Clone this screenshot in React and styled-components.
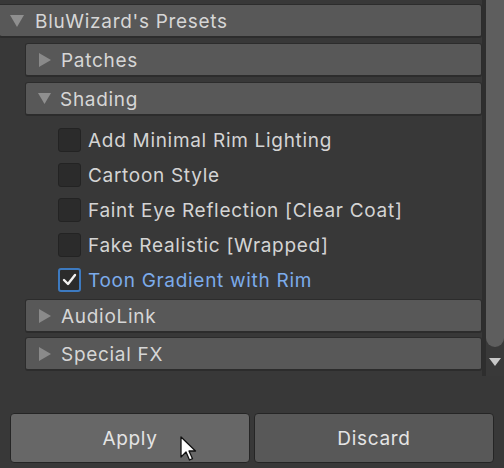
import React from "react";
import styled, { createGlobalStyle } from "styled-components";

const Global = createGlobalStyle`
  html, body { margin: 0; padding: 0; background: #383838; }
  body { font-family: Inter, "Noto Sans", sans-serif; }
`;

const Window = styled.div`
  position: relative;
  width: 504px;
  height: 468px;
  background: #383838;
  display: flex;
  flex-direction: column;
  overflow: hidden;
  color: #d4d4d4;
  font-size: 19px;
  letter-spacing: 0.7px;
`;

const ScrollArea = styled.div`
  height: 376px;
  display: flex;
  flex-direction: row;
`;

const Content = styled.div`
  flex: 1;
  display: flex;
  flex-direction: column;
  padding-top: 4px;
`;

const Scrollbar = styled.div`
  width: 18px;
  border-left: 4px solid #2e2e2e;
  background: #393939;
  display: flex;
  flex-direction: column;
  align-items: center;
`;

const Thumb = styled.div`
  width: 18px;
  height: 347px;
  background: #5e5e5e;
  border-radius: 0 0 9px 9px;
`;

const DownArrow = styled.svg`
  margin-top: 11px;
  display: block;
`;

const Foldout = styled.div`
  box-sizing: border-box;
  height: 34px;
  display: flex;
  align-items: center;
  padding-left: ${(p) => (p.$top ? 10 : 12)}px;
  gap: ${(p) => (p.$top ? 11 : 9)}px;
  background: #585858;
  border: 1px solid #2c2c2c;
  border-bottom-width: 2px;
  border-radius: ${(p) => (p.$top ? "0 3px 3px 3px" : "3px")};
  margin-left: ${(p) => (p.$top ? -1 : 0)}px;
  color: #d6d6d6;
  white-space: nowrap;
`;

const Label = styled.span`
  padding-top: ${(p) => p.$shift || 2}px;
`;

const SubList = styled.div`
  display: flex;
  flex-direction: column;
  padding-left: 25px;
  margin-top: 5px;
  gap: 5px;
`;

const Group = styled.div`
  display: flex;
  flex-direction: column;
  gap: ${(p) => p.$gap || 0}px;
`;

const CheckList = styled.div`
  display: flex;
  flex-direction: column;
  padding: 6px 0 2px 33px;
`;

const CheckRow = styled.label`
  height: 35px;
  display: flex;
  align-items: center;
  gap: 7px;
  color: ${(p) => (p.$on ? "#7cabea" : "#d4d4d4")};
  white-space: nowrap;
`;

const Box = styled.span`
  box-sizing: border-box;
  width: 23px;
  height: 24px;
  border-radius: 3px;
  background: #2b2b2b;
  border: ${(p) => (p.$on ? "2px solid #3d7ac0" : "1px solid #232323")};
  display: flex;
  align-items: center;
  justify-content: center;
`;

const Buttons = styled.div`
  margin-top: 37px;
  display: flex;
  gap: 4px;
  padding: 0 10px;
`;

const Button = styled.button`
  box-sizing: border-box;
  width: 240px;
  height: 50px;
  border: 1px solid #252525;
  border-radius: 4px;
  background: ${(p) => (p.$hover ? "#676767" : "#585858")};
  color: #e4e4e4;
  font-family: Inter, "Noto Sans", sans-serif;
  font-size: 19px;
  letter-spacing: 0.7px;
  padding: 1px 0 0;
`;

const Cursor = styled.svg`
  position: absolute;
  left: 180px;
  top: 436px;
`;

const TriDown = ({ size = 14 }) => (
  <svg width={size} height={size} viewBox="0 0 14 14">
    <polygon points="0,1 14,1 7,13" fill="#8f8f8f" />
  </svg>
);

const TriRight = () => (
  <svg width="14" height="14" viewBox="0 0 14 14">
    <polygon points="1,0 13,7 1,14" fill="#8a8a8a" />
  </svg>
);

const Check = () => (
  <svg width="15" height="13" viewBox="0 0 15 13">
    <path d="M2 7 L6 11 L13 2" stroke="#f2f2f2" strokeWidth="2.4" fill="none" strokeLinecap="round" strokeLinejoin="round" />
  </svg>
);

const items = [
  { label: "Add Minimal Rim Lighting", on: false },
  { label: "Cartoon Style", on: false },
  { label: "Faint Eye Reflection [Clear Coat]", on: false },
  { label: "Fake Realistic [Wrapped]", on: false },
  { label: "Toon Gradient with Rim", on: true },
];

export default function App() {
  return (
    <>
      <Global />
      <Window>
        <ScrollArea>
          <Content>
            <Foldout $top>
              <TriDown />
              <Label>BluWizard's Presets</Label>
            </Foldout>
            <SubList>
              <Foldout>
                <TriRight />
                <Label>Patches</Label>
              </Foldout>
              <Group>
                <Foldout>
                  <TriDown size={13} />
                  <Label>Shading</Label>
                </Foldout>
                <CheckList>
                  {items.map((it) => (
                    <CheckRow key={it.label} $on={it.on}>
                      <Box $on={it.on}>{it.on && <Check />}</Box>
                      <Label $shift={1}>{it.label}</Label>
                    </CheckRow>
                  ))}
                </CheckList>
                <Group $gap={4}>
                  <Foldout>
                    <TriRight />
                    <Label>AudioLink</Label>
                  </Foldout>
                  <Foldout>
                    <TriRight />
                    <Label>Special FX</Label>
                  </Foldout>
                </Group>
              </Group>
            </SubList>
          </Content>
          <Scrollbar>
            <Thumb />
            <DownArrow width="12" height="8" viewBox="0 0 12 8">
              <polygon points="0,0 12,0 6,8" fill="#c8c8c8" />
            </DownArrow>
          </Scrollbar>
        </ScrollArea>
        <Buttons>
          <Button $hover>Apply</Button>
          <Button>Discard</Button>
        </Buttons>
        <Cursor width="18" height="28" viewBox="0 0 18 28">
          <path d="M1 1 L1 21 L6 16 L9.5 24 L12.5 22.7 L9 15 L15.5 15 Z" fill="#ffffff" stroke="#111" strokeWidth="1.3" strokeLinejoin="round" />
        </Cursor>
      </Window>
    </>
  );
}
